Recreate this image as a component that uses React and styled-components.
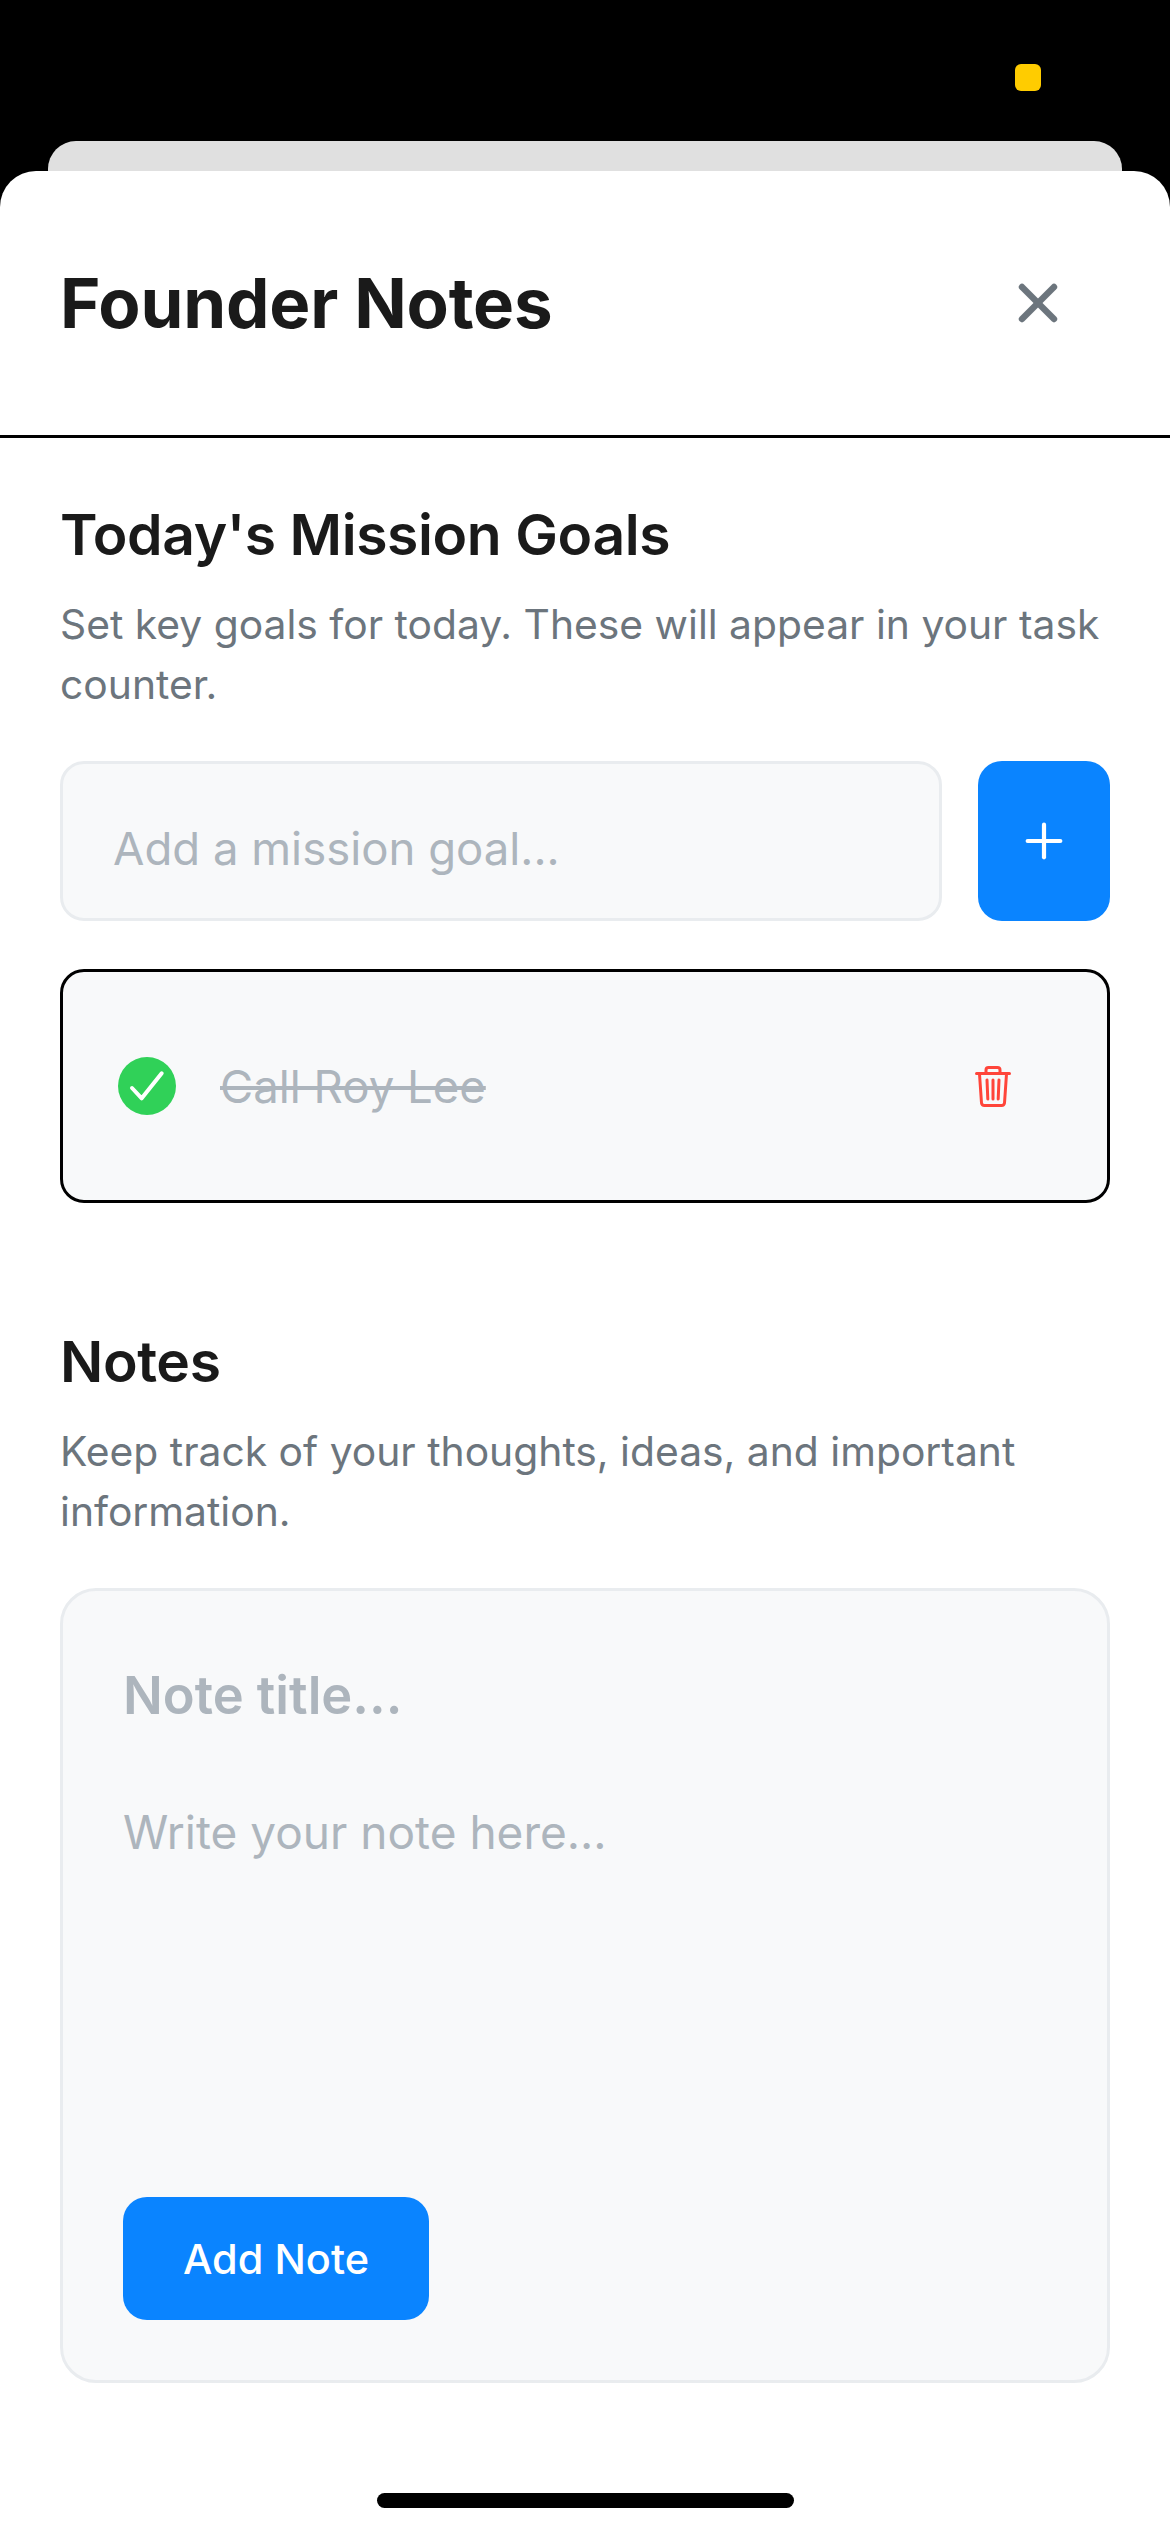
import styled, { createGlobalStyle } from "styled-components"
import { X, Plus } from "lucide-react"

const GlobalStyle = createGlobalStyle`
    * {
        box-sizing: border-box;
    }

    body {
        margin: 0;
        background: #000;
        font-family: Inter, "Noto Sans", sans-serif;
    }
`

const TrashIcon = () => (
    <svg width="36" height="41" viewBox="0 0 36 41" fill="none" stroke="#FF453A" strokeWidth="3" strokeLinecap="round" strokeLinejoin="round">
        <path d="M1.5 7.5h33" />
        <path d="M11 7V4a2.5 2.5 0 0 1 2.5-2.5h9A2.5 2.5 0 0 1 25 4v3" />
        <path d="M4.5 8l2 29a3 3 0 0 0 3 2.5h17a3 3 0 0 0 3-2.5l2-29" />
        <path d="M12 14l.8 19" />
        <path d="M18 14v19" />
        <path d="M24 14l-.8 19" />
    </svg>
)

const CheckIcon = () => (
    <svg width="58" height="58" viewBox="0 0 58 58" fill="none" stroke="#FFF" strokeWidth="4" strokeLinecap="round" strokeLinejoin="round">
        <path d="M14 31l9.7 10.3L43.7 16.3" />
    </svg>
)

const App = () => {
    return (
        <>
            <GlobalStyle />
            <Screen>
                <StatusBar>
                    <PrivacyDot />
                </StatusBar>
                <BehindCard />
                <Sheet>
                    <SheetHeader>
                        <SheetTitle>Founder Notes</SheetTitle>
                        <CloseButton>
                            <X size={64} color="#6C757D" strokeWidth={2.4} />
                        </CloseButton>
                    </SheetHeader>

                    <SheetBody>
                        <SectionTitle>Today's Mission Goals</SectionTitle>
                        <SectionText>Set key goals for today. These will appear in your task counter.</SectionText>

                        <GoalForm>
                            <GoalInput placeholder="Add a mission goal..." />
                            <AddButton>
                                <Plus size={56} color="#FFF" strokeWidth={1.8} />
                            </AddButton>
                        </GoalForm>

                        <GoalItem>
                            <CheckCircle>
                                <CheckIcon />
                            </CheckCircle>
                            <GoalText>Call Roy Lee</GoalText>
                            <DeleteButton>
                                <TrashIcon />
                            </DeleteButton>
                        </GoalItem>

                        <NotesTitle>Notes</NotesTitle>
                        <SectionText>Keep track of your thoughts, ideas, and important information.</SectionText>

                        <NoteCard>
                            <NoteTitleInput placeholder="Note title..." />
                            <NoteArea placeholder="Write your note here..." />
                            <AddNoteButton>Add Note</AddNoteButton>
                        </NoteCard>
                    </SheetBody>

                    <HomeBar />
                </Sheet>
            </Screen>
        </>
    )
}

export default App

const Screen = styled.div`
    width: 1170px;
    height: 2532px;
    overflow: hidden;

    background: #000;
`

const StatusBar = styled.div`
    display: flex;
    justify-content: flex-end;

    height: 141px;
    padding: 64px 129px 0 0;
`

const PrivacyDot = styled.div`
    width: 26px;
    height: 27px;

    border-radius: 6px;
    background: #FFCC00;
`

const BehindCard = styled.div`
    height: 60px;
    margin: 0 48px;

    border-radius: 28px 28px 0 0;
    background: #E0E0E0;
`

const Sheet = styled.div`
    position: relative;

    display: flex;
    flex-direction: column;

    height: 2361px;
    margin-top: -30px;

    border-radius: 36px 36px 0 0;
    background: #FFF;
`

const SheetHeader = styled.div`
    display: flex;
    align-items: center;
    justify-content: space-between;

    height: 267px;
    padding: 0 100px 0 60px;

    border-bottom: 3px solid #000;
`

const SheetTitle = styled.div`
    color: #1A1A1A;
    font-size: 69px;
    font-weight: 700;
    letter-spacing: -0.2px;
`

const CloseButton = styled.div`
    display: flex;
`

const SheetBody = styled.div`
    display: flex;
    flex-direction: column;
    flex: 1;

    padding: 63px 60px 0;
`

const SectionTitle = styled.div`
    color: #1A1A1A;
    font-size: 57px;
    font-weight: 600;
    line-height: 68px;
    letter-spacing: -0.4px;
`

const NotesTitle = styled(SectionTitle)`
    margin-top: 125px;
`

const SectionText = styled.div`
    margin-top: 25px;

    color: #6C757D;
    font-size: 40.8px;
    line-height: 60px;
`

const GoalForm = styled.div`
    display: flex;
    gap: 36px;

    margin-top: 47px;
`

const GoalInput = styled.input`
    flex: 1;
    min-width: 0;
    height: 160px;
    padding: 14px 50px 0;

    border: 3px solid #E9ECEF;
    border-radius: 24px;
    background: #F8F9FA;
    outline: none;

    font-family: inherit;
    font-size: 45.5px;

    &::placeholder {
        color: #ADB5BD;
        opacity: 1;
    }
`

const AddButton = styled.div`
    display: flex;
    align-items: center;
    justify-content: center;

    width: 132px;
    height: 160px;

    border-radius: 24px;
    background: #0A84FF;
`

const GoalItem = styled.div`
    display: flex;
    align-items: center;

    height: 234px;
    margin-top: 48px;
    padding: 0 96px 0 55px;

    border: 3px solid #000;
    border-radius: 24px;
    background: #F8F9FA;
`

const CheckCircle = styled.div`
    display: flex;

    width: 58px;
    height: 58px;

    border-radius: 50%;
    background: #30D158;
`

const GoalText = styled.div`
    flex: 1;
    margin-left: 44px;

    color: #ADB5BD;
    font-size: 45.5px;
    text-decoration: line-through;
`

const DeleteButton = styled.div`
    display: flex;
`

const NoteCard = styled.div`
    display: flex;
    flex-direction: column;
    align-items: flex-start;

    height: 795px;
    margin-top: 47px;
    padding: 72px 60px 60px;

    border: 3px solid #E9ECEF;
    border-radius: 36px;
    background: #F8F9FA;
`

const NoteTitleInput = styled.input`
    width: 100%;
    padding: 0;

    border: none;
    background: transparent;
    outline: none;

    font-family: inherit;
    font-size: 52.4px;
    font-weight: 600;

    &::placeholder {
        color: #ADB5BD;
        opacity: 1;
    }
`

const NoteArea = styled.textarea`
    flex: 1;
    width: 100%;
    margin-top: 77px;
    padding: 0;

    border: none;
    background: transparent;
    outline: none;
    resize: none;

    font-family: inherit;
    font-size: 46px;

    &::placeholder {
        color: #ADB5BD;
        opacity: 1;
    }
`

const AddNoteButton = styled.div`
    display: flex;
    align-items: center;
    justify-content: center;

    width: 306px;
    height: 123px;

    border-radius: 24px;
    background: #0A84FF;

    color: #FFF;
    font-size: 41.5px;
    font-weight: 500;
`

const HomeBar = styled.div`
    align-self: center;

    width: 417px;
    height: 15px;
    margin-bottom: 24px;

    border-radius: 8px;
    background: #000;
`
